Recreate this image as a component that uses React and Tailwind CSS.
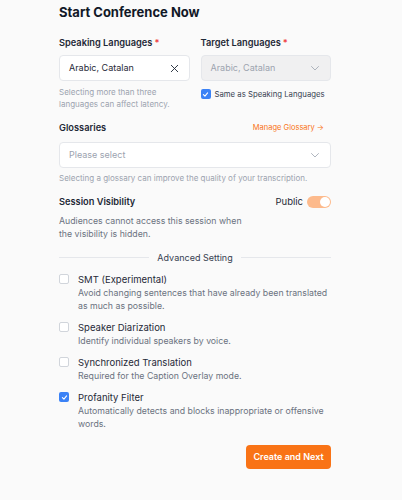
import React from "react";

function Check({ checked }) {
  if (checked) {
    return (
      <span className="flex h-[10px] w-[10px] shrink-0 items-center justify-center rounded-[2px] bg-[#3b82f6]">
        <svg width="7" height="7" viewBox="0 0 10 10" fill="none">
          <path d="M2 5.2 L4.2 7.3 L8 2.8" stroke="white" strokeWidth="1.6" strokeLinecap="round" strokeLinejoin="round" />
        </svg>
      </span>
    );
  }
  return <span className="block h-[10px] w-[10px] shrink-0 rounded-[2px] border border-[#d1d5db] bg-white" />;
}

function Chevron() {
  return (
    <svg width="12" height="12" viewBox="0 0 24 24" fill="none" stroke="#9ca3af" strokeWidth="1.6" strokeLinecap="round" strokeLinejoin="round">
      <path d="M5 9l7 7 7-7" />
    </svg>
  );
}

function Item({ checked, title, desc }) {
  return (
    <div className="flex gap-[9px]">
      <div className="shrink-0 pt-[1.5px]">
        <Check checked={checked} />
      </div>
      <div>
        <div className="text-[9.5px] leading-[13px] text-[#1f2937]">{title}</div>
        <div className="mt-[1px] text-[8.75px] leading-[13px] text-[#6b7280]">{desc}</div>
      </div>
    </div>
  );
}

export default function App() {
  return (
    <div className="h-[500px] w-full bg-[#fafafa] font-['Inter',sans-serif]">
      <div className="ml-[59px] w-[272px] pt-[3px]">
        <h1 className="text-[13px] font-bold leading-[18px] text-[#111827]">Start Conference Now</h1>

        <div className="mt-[15px] grid grid-cols-2 gap-x-[11px]">
          <div>
            <div className="text-[9.25px] font-semibold leading-[14px] text-[#1f2937]">
              Speaking Languages<span className="ml-[2px] text-[#ef4444]">*</span>
            </div>
            <div className="mt-[5px] flex h-[26px] items-center justify-between rounded-[4px] border border-[#e5e7eb] bg-white px-[9px]">
              <span className="text-[9px] text-[#1f2937]">Arabic, Catalan</span>
              <svg width="11" height="11" viewBox="0 0 24 24" fill="none" stroke="#1f2937" strokeWidth="2" strokeLinecap="round">
                <path d="M5 5l14 14M19 5L5 19" />
              </svg>
            </div>
            <div className="mt-[6px] text-[8px] leading-[11.5px] text-[#9ca3af]">
              Selecting more than three languages can affect latency.
            </div>
          </div>
          <div>
            <div className="text-[9.25px] font-semibold leading-[14px] text-[#1f2937]">
              Target Languages<span className="ml-[2px] text-[#ef4444]">*</span>
            </div>
            <div className="mt-[5px] flex h-[26px] items-center justify-between rounded-[4px] border border-[#e5e7eb] bg-[#f0f0f1] px-[9px]">
              <span className="text-[9px] text-[#9ca3af]">Arabic, Catalan</span>
              <Chevron />
            </div>
            <div className="mt-[8px] flex items-center gap-[4px]">
              <Check checked />
              <span className="text-[7.75px] leading-[10px] text-[#374151]">Same as Speaking Languages</span>
            </div>
          </div>
        </div>

        <div className="mt-[11px] flex items-center justify-between">
          <div className="text-[9.25px] font-semibold leading-[14px] text-[#1f2937]">Glossaries</div>
          <div className="mr-[7px] text-[7.5px] leading-[14px] text-[#f97316]">Manage Glossary →</div>
        </div>
        <div className="mt-[7px] flex h-[26px] items-center justify-between rounded-[4px] border border-[#e5e7eb] bg-white px-[9px]">
          <span className="text-[9px] text-[#9ca3af]">Please select</span>
          <Chevron />
        </div>
        <div className="mt-[5px] text-[8px] leading-[11.5px] text-[#9ca3af]">
          Selecting a glossary can improve the quality of your transcription.
        </div>

        <div className="mt-[10.5px] flex items-center justify-between">
          <div className="text-[9.25px] font-semibold leading-[14px] text-[#1f2937]">Session Visibility</div>
          <div className="flex items-center gap-[4px]">
            <span className="text-[9.5px] leading-[14px] text-[#1f2937]">Public</span>
            <span className="flex h-[12px] w-[24px] items-center justify-end rounded-full bg-[#fdba8c] px-[1px]">
              <span className="h-[10px] w-[10px] rounded-full bg-white" />
            </span>
          </div>
        </div>
        <div className="mt-[5.5px] w-[190px] text-[8.75px] leading-[13px] text-[#6b7280]">
          Audiences cannot access this session when the visibility is hidden.
        </div>

        <div className="mt-[10px] flex items-center gap-[8px]">
          <div className="h-px flex-1 bg-[#e5e7eb]" />
          <span className="text-[9px] leading-[14px] text-[#374151]">Advanced Setting</span>
          <div className="h-px flex-1 bg-[#e5e7eb]" />
        </div>

        <div className="mt-[8px] flex flex-col gap-[8px]">
          <Item title="SMT (Experimental)" desc="Avoid changing sentences that have already been translated as much as possible." />
          <Item title="Speaker Diarization" desc="Identify individual speakers by voice." />
          <Item title="Synchronized Translation" desc="Required for the Caption Overlay mode." />
          <Item checked title="Profanity Filter" desc="Automatically detects and blocks inappropriate or offensive words." />
        </div>

        <div className="mt-[14px] flex justify-end">
          <button className="h-[24px] w-[85px] rounded-[4px] bg-[#f97316] text-[9px] font-semibold text-white">
            Create and Next
          </button>
        </div>
      </div>
    </div>
  );
}
